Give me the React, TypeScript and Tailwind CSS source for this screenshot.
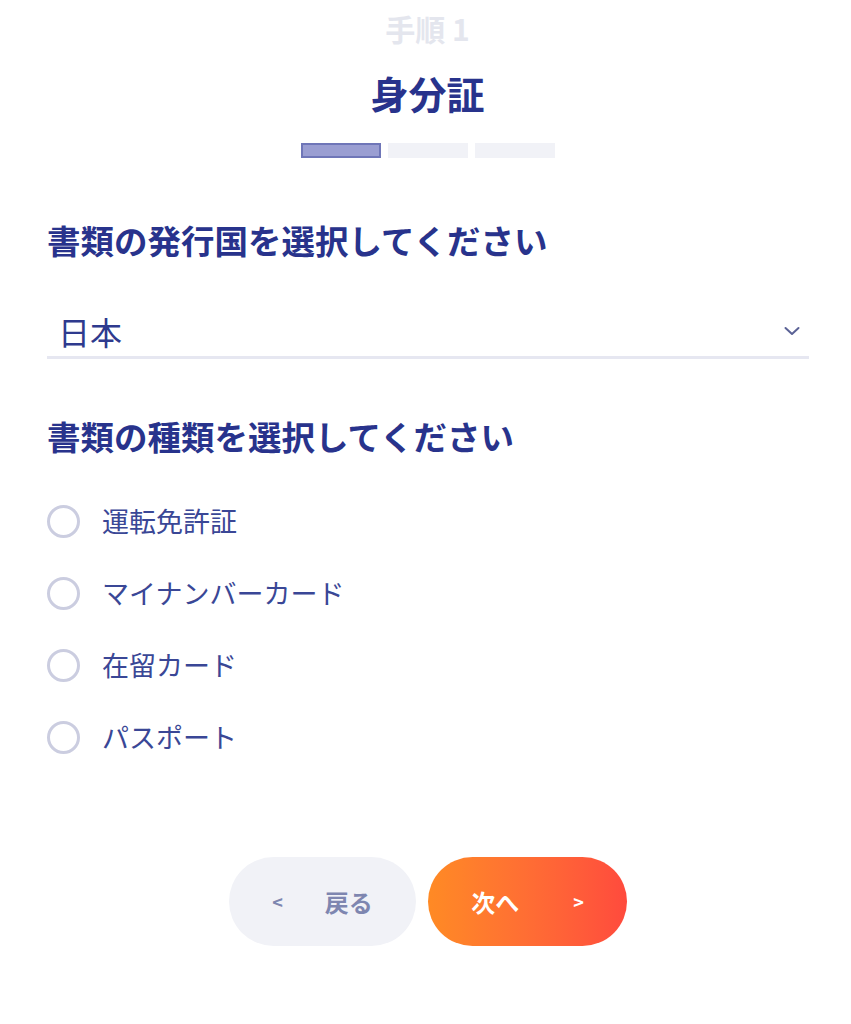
import { useState } from 'react'

const docTypes = ['運転免許証', 'マイナンバーカード', '在留カード', 'パスポート']

export default function App() {
  const [selected, setSelected] = useState<string | null>(null)

  return (
    <div
      className="min-h-[1024px] w-[851px] bg-white"
      style={{ fontFamily: '"Noto Sans CJK JP", "Noto Sans", sans-serif' }}
    >
      <div className="flex flex-col items-center pl-[4px] pt-[10px]">
        <p className="text-[30px] font-bold leading-[36px] text-[#e4e6ee]">手順 1</p>
        <h1 className="mt-[23px] text-[38px] font-bold leading-[48px] text-[#28338c]">身分証</h1>
        <div className="mt-[26px] flex gap-[7px]">
          <div className="h-[15px] w-[80px] border-2 border-[#6f76b8] bg-[#9a9ed2]" />
          <div className="h-[15px] w-[80px] bg-[#f1f2f7]" />
          <div className="h-[15px] w-[80px] bg-[#f1f2f7]" />
        </div>
      </div>

      <div className="pl-[47px] pr-[42px]">
        <h2 className="mt-[62px] text-[33.5px] font-bold leading-[40px] text-[#28338c]">
          書類の発行国を選択してください
        </h2>

        <div className="mt-[51px] flex items-center justify-between border-b-[3px] border-[#e6e7f1] pb-[5px] pl-[11px] pr-[9px]">
          <span className="text-[32px] leading-[40px] text-[#2e3a8e]">日本</span>
          <svg width="16" height="10" viewBox="0 0 16 10" fill="none">
            <path d="M1.5 2l6.5 6 6.5-6" stroke="#5b6296" strokeWidth="2" strokeLinecap="round" strokeLinejoin="round" />
          </svg>
        </div>

        <h2 className="mt-[57px] text-[33.5px] font-bold leading-[40px] text-[#28338c]">
          書類の種類を選択してください
        </h2>

        <div className="mt-[47px] flex flex-col gap-[36px]">
          {docTypes.map((t) => (
            <label key={t} className="flex cursor-pointer items-center gap-[22px]" onClick={() => setSelected(t)}>
              <span className="flex h-[33px] w-[33px] items-center justify-center rounded-full border-[3px] border-[#cbcde0]">
                {selected === t && <span className="h-[15px] w-[15px] rounded-full bg-[#28338c]" />}
              </span>
              <span className="text-[27px] leading-[36px] text-[#3a4796]">{t}</span>
            </label>
          ))}
        </div>
      </div>

      <div className="mt-[102px] flex justify-center gap-[12px] pl-[5px]">
        <button className="flex h-[89px] w-[187px] items-center justify-center gap-[42px] rounded-full bg-[#f1f2f7] text-[24px] font-bold text-[#7e86b0]">
          <span className="text-[18px]">&lt;</span>
          <span>戻る</span>
        </button>
        <button className="flex h-[89px] w-[199px] items-center justify-center gap-[54px] rounded-full bg-gradient-to-r from-[#ff8a24] to-[#ff4a3d] text-[24px] font-bold text-white">
          <span>次へ</span>
          <span className="text-[18px]">&gt;</span>
        </button>
      </div>
    </div>
  )
}
